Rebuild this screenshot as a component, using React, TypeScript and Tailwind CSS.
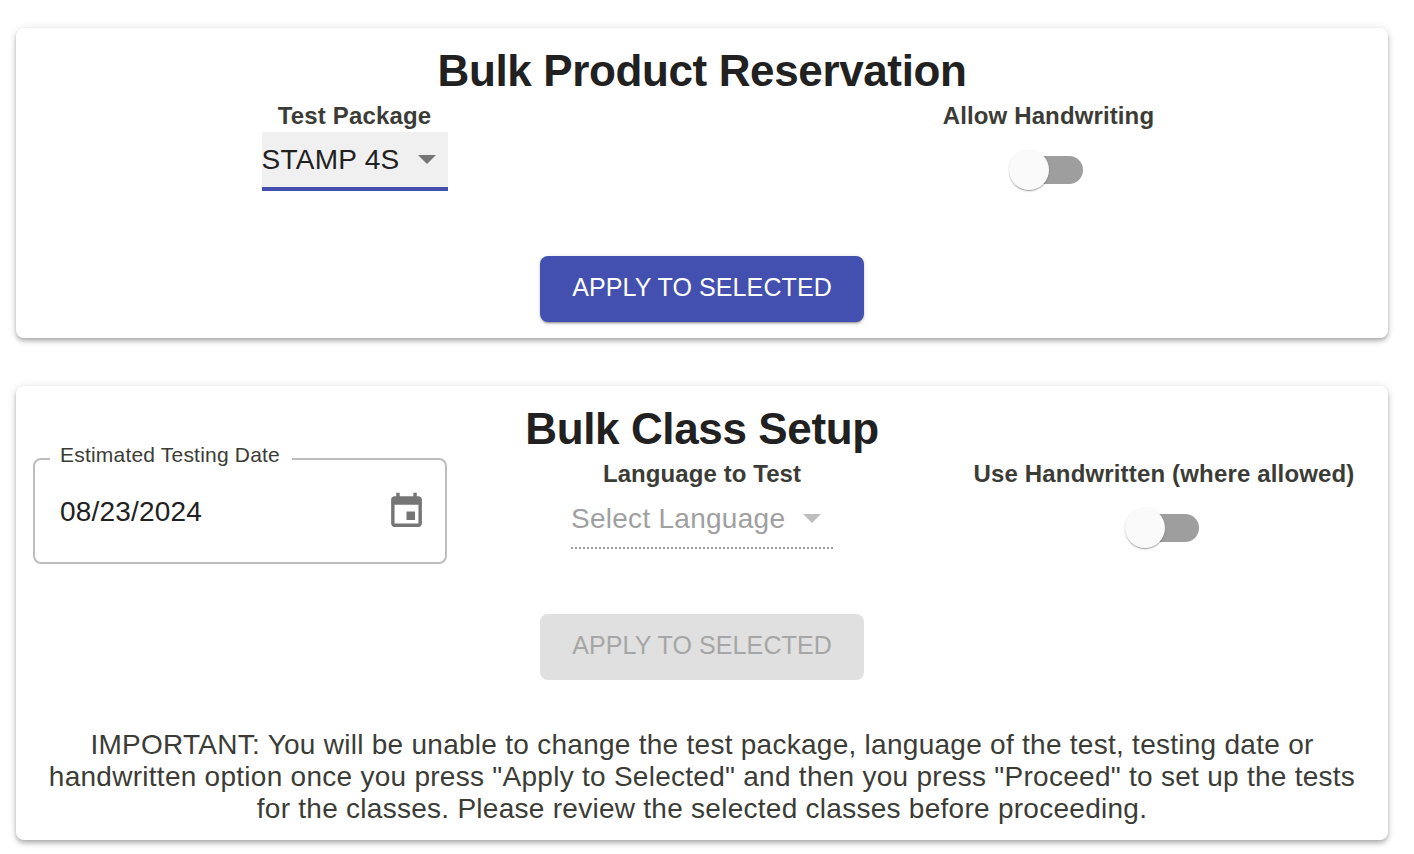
import React from 'react';

const Toggle = () => (
  <div className="relative w-[74px] h-[40px] flex items-center -ml-[4px]">
    <div className="ml-[14px] w-[60px] h-[28px] rounded-full bg-[#9e9e9e]" />
    <div className="absolute left-0 top-0 w-[40px] h-[40px] rounded-full bg-[#fafafa] shadow-[0_2px_1px_-1px_rgba(0,0,0,0.2),0_1px_1px_0_rgba(0,0,0,0.14),0_1px_3px_0_rgba(0,0,0,0.12)]" />
  </div>
);

const Caret = ({ color }: { color: string }) => (
  <svg width="18" height="9" viewBox="0 0 18 9" className={color}>
    <path d="M0 0h18L9 9z" fill="currentColor" />
  </svg>
);

const App: React.FC = () => {
  return (
    <div className="min-h-[854px] bg-white pt-[28px] pl-[16px] pr-[26px] font-['Liberation_Sans',Arial,sans-serif]">
      <div className="h-[310px] rounded-[8px] bg-white shadow-[0_2px_4px_-1px_rgba(0,0,0,0.2),0_4px_5px_0_rgba(0,0,0,0.14),0_1px_10px_0_rgba(0,0,0,0.12)] pt-[16px]">
        <h1 className="text-center text-[44px] leading-[54px] font-bold text-[#212121] tracking-[-0.37px]">Bulk Product Reservation</h1>
        <div className="grid grid-cols-2 -ml-[8px] -mr-[6px]">
          <div className="flex flex-col items-center">
            <div className="text-[24px] leading-[36px] font-bold text-[#3c3c37] h-[34px] tracking-[0.15px]">Test Package</div>
            <div className="w-[186px] h-[59px] bg-[#f0f0f0] border-b-[4px] border-[#4350af] flex items-center justify-between pr-[12px] text-[28px] leading-[34px] text-[#212121] tracking-[0.25px]">
              <span>STAMP 4S</span>
              <Caret color="text-[#757575]" />
            </div>
          </div>
          <div className="flex flex-col items-center">
            <div className="ml-[2px] text-[24px] leading-[36px] font-bold text-[#3c3c37] h-[34px] tracking-[0.12px]">Allow Handwriting</div>
            <div className="mt-[18px]"><Toggle /></div>
          </div>
        </div>
        <div className="flex justify-center mt-[65px]">
          <button className="w-[324px] h-[66px] pb-[3px] rounded-[8px] bg-[#4350af] text-white text-[25px] tracking-[0.1px] shadow-[0_3px_1px_-2px_rgba(0,0,0,0.2),0_2px_2px_0_rgba(0,0,0,0.14),0_1px_5px_0_rgba(0,0,0,0.12)]">APPLY TO SELECTED</button>
        </div>
      </div>

      <div className="mt-[48px] h-[454px] rounded-[8px] bg-white shadow-[0_2px_4px_-1px_rgba(0,0,0,0.2),0_4px_5px_0_rgba(0,0,0,0.14),0_1px_10px_0_rgba(0,0,0,0.12)] pt-[16px]">
        <h1 className="text-center text-[44px] leading-[54px] font-bold text-[#212121] tracking-[-0.37px]">Bulk Class Setup</h1>
        <div className="grid grid-cols-3 -mx-[7px]">
          <div className="px-[24px] mt-[2px]">
            <div className="relative h-[106px] rounded-[8px] border-2 border-[#bdbdbd] flex items-center justify-between pl-[25px] pr-[18px]">
              <span className="absolute left-[15px] -top-[18px] bg-white pl-[10px] pr-[12px] text-[21px] leading-[26px] text-[#3c3c37] tracking-[0.2px]">Estimated Testing Date</span>
              <span className="pt-[2px] text-[28px] text-[#212121] tracking-[0.2px]">08/23/2024</span>
              <svg width="41" height="41" viewBox="0 0 24 24" fill="#757575">
                <path d="M17 12h-5v5h5v-5zM16 1v2H8V1H6v2H5c-1.11 0-1.99.9-1.99 2L3 19c0 1.1.89 2 2 2h14c1.1 0 2-.9 2-2V5c0-1.1-.9-2-2-2h-1V1h-2zm3 18H5V8h14v11z" />
              </svg>
            </div>
          </div>
          <div className="flex flex-col items-center">
            <div className="text-[24px] leading-[36px] font-bold text-[#3c3c37] h-[34px] tracking-[0.08px]">Language to Test</div>
            <div className="w-[262px] h-[59px] border-b-[2px] border-dotted border-[#9e9e9e] flex items-center justify-between pr-[12px] text-[28px] text-[#a0a0a0] tracking-[0.27px]">
              <span>Select Language</span>
              <Caret color="text-[#bdbdbd]" />
            </div>
          </div>
          <div className="flex flex-col items-center">
            <div className="text-[24px] leading-[36px] font-bold text-[#3c3c37] h-[34px] tracking-[0.16px]">Use Handwritten (where allowed)</div>
            <div className="mt-[18px]"><Toggle /></div>
          </div>
        </div>
        <div className="flex justify-center mt-[50px]">
          <button className="w-[324px] h-[66px] pb-[3px] rounded-[8px] bg-[#e0e0e0] text-[#a6a6a6] text-[25px] tracking-[0.1px]">APPLY TO SELECTED</button>
        </div>
        <p className="mt-[49px] px-[30px] text-center text-[28px] leading-[32px] text-[#3c3c37] tracking-[0.27px]">
          IMPORTANT: You will be unable to change the test package, language of the test, testing date or handwritten option once you press "Apply to Selected" and then you press "Proceed" to set up the tests for the classes. Please review the selected classes before proceeding.
        </p>
      </div>
    </div>
  );
};

export default App;
